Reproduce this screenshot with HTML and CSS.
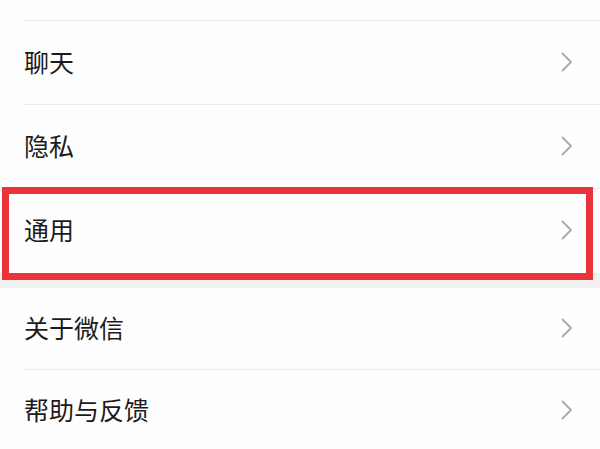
FILE: index.html
```html
<!DOCTYPE html>
<html lang="zh-CN">
<head>
<meta charset="utf-8">
<title>设置</title>
<link rel="stylesheet" href="styles.css">
</head>
<body>
<div class="page">
  <div class="group">
    <div class="row row-top"></div>
    <div class="row"><span class="label">聊天</span><svg class="chev" viewBox="0 0 12 20"><polyline points="1.5,1.5 10,10 1.5,18.5"/></svg></div>
    <div class="row"><span class="label">隐私</span><svg class="chev" viewBox="0 0 12 20"><polyline points="1.5,1.5 10,10 1.5,18.5"/></svg></div>
    <div class="row row-last"><span class="label">通用</span><svg class="chev" viewBox="0 0 12 20"><polyline points="1.5,1.5 10,10 1.5,18.5"/></svg></div>
  </div>
  <div class="gap"></div>
  <div class="group">
    <div class="row row-a"><span class="label">关于微信</span><svg class="chev" viewBox="0 0 12 20"><polyline points="1.5,1.5 10,10 1.5,18.5"/></svg></div>
    <div class="row row-b row-last"><span class="label">帮助与反馈</span><svg class="chev" viewBox="0 0 12 20"><polyline points="1.5,1.5 10,10 1.5,18.5"/></svg></div>
  </div>
  <div class="highlight"></div>
</div>
</body>
</html>
```

FILE: styles.css
```css
html, body {
  margin: 0;
  padding: 0;
  background: #fefefe;
}
.page {
  position: relative;
  width: 600px;
  height: 449px;
  overflow: hidden;
  font-family: "Noto Sans CJK SC", "Noto Sans", sans-serif;
}
.group {
  display: flex;
  flex-direction: column;
  background: #fefefe;
}
.row {
  position: relative;
  display: flex;
  align-items: center;
  justify-content: space-between;
  height: 83px;
  padding: 0 27px 0 24px;
  border-bottom: 1px solid transparent;
  box-sizing: content-box;
}
.row::after {
  content: "";
  position: absolute;
  left: 24px;
  right: 0;
  bottom: -1px;
  height: 1px;
  background: #ebebeb;
}
.row-last::after {
  display: none;
}
.row-top {
  height: 20px;
}
.row-a {
  height: 81px;
}
.row-b {
  height: 81px;
}
.label {
  font-size: 25px;
  color: #1b1b1b;
  line-height: 1;
  margin-top: -2px;
}
.chev {
  width: 12px;
  height: 20px;
  margin-top: -1px;
}
.chev polyline {
  fill: none;
  stroke: #a9a9a9;
  stroke-width: 1.8;
  stroke-linecap: round;
  stroke-linejoin: round;
}
.gap {
  height: 15px;
  background: #f1f1f1;
}
.highlight {
  position: absolute;
  left: 2px;
  top: 187px;
  width: 591px;
  height: 93px;
  box-sizing: border-box;
  border: 7px solid #ea343b;
}
```
